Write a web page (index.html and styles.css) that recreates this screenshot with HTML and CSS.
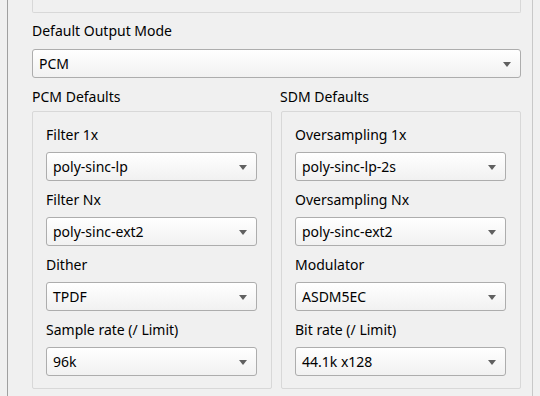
FILE: index.html
```html
<!DOCTYPE html>
<html lang="en">
  <head>
    <meta charset="UTF-8" />
    <meta name="viewport" content="width=device-width, initial-scale=1.0" />
    <title>Output Settings</title>
    <link rel="stylesheet" href="styles.css">
  </head>
  <body>
    <div class="frame">
      <div class="group-tail"></div>

      <div class="field-label">Default Output Mode</div>
      <div class="combo combo-wide">
        <span class="combo-text">PCM</span>
        <span class="combo-arrow"></span>
      </div>

      <div class="columns">
        <div class="column">
          <div class="group-title">PCM Defaults</div>
          <div class="group-box">
            <div class="field-label">Filter 1x</div>
            <div class="combo">
              <span class="combo-text">poly-sinc-lp</span>
              <span class="combo-arrow"></span>
            </div>
            <div class="field-label">Filter Nx</div>
            <div class="combo">
              <span class="combo-text">poly-sinc-ext2</span>
              <span class="combo-arrow"></span>
            </div>
            <div class="field-label">Dither</div>
            <div class="combo">
              <span class="combo-text">TPDF</span>
              <span class="combo-arrow"></span>
            </div>
            <div class="field-label">Sample rate (/ Limit)</div>
            <div class="combo">
              <span class="combo-text">96k</span>
              <span class="combo-arrow"></span>
            </div>
          </div>
        </div>

        <div class="column">
          <div class="group-title">SDM Defaults</div>
          <div class="group-box">
            <div class="field-label">Oversampling 1x</div>
            <div class="combo">
              <span class="combo-text">poly-sinc-lp-2s</span>
              <span class="combo-arrow"></span>
            </div>
            <div class="field-label">Oversampling Nx</div>
            <div class="combo">
              <span class="combo-text">poly-sinc-ext2</span>
              <span class="combo-arrow"></span>
            </div>
            <div class="field-label">Modulator</div>
            <div class="combo">
              <span class="combo-text">ASDM5EC</span>
              <span class="combo-arrow"></span>
            </div>
            <div class="field-label">Bit rate (/ Limit)</div>
            <div class="combo">
              <span class="combo-text">44.1k x128</span>
              <span class="combo-arrow"></span>
            </div>
          </div>
        </div>
      </div>
    </div>
  </body>
</html>
```

FILE: styles.css
```css
  html,
  body {
    margin: 0;
    padding: 0;
    height: 100%;
    overflow: hidden;
    background-color: #f0f0f0;
  }

  body {
    font-family: "Noto Sans", "Open Sans", sans-serif;
    font-size: 14px;
    color: #000;
  }

  /* scroll area frame around the settings page */
  .frame {
    margin-left: 7px;
    width: 526px;
    height: 100%;
    padding-left: 24px;
    box-sizing: border-box;
    border-left: 1px solid #a0a0a0;
    border-right: 1px solid #c8c8c8;
  }

  /* bottom of the group box scrolled above */
  .group-tail {
    width: 489px;
    height: 13px;
    box-sizing: border-box;
    border: 1px solid #d8d8d8;
    border-top: none;
    border-radius: 0 0 2px 2px;
    margin-bottom: 8px;
  }

  .field-label {
    line-height: 20px;
    height: 20px;
    white-space: nowrap;
  }

  .combo {
    display: flex;
    align-items: center;
    justify-content: space-between;
    height: 29px;
    box-sizing: border-box;
    margin-top: 7px;
    margin-bottom: 9px;
    padding: 0 9px 0 6px;
    border: 1px solid #adadad;
    border-radius: 3px;
    background: linear-gradient(to bottom, #ffffff, #f1f1f1);
  }

  .combo-wide {
    width: 489px;
    margin-top: 8px;
  }

  .combo-text {
    line-height: 27px;
    white-space: nowrap;
  }

  .combo-arrow {
    width: 0;
    height: 0;
    border-left: 4px solid transparent;
    border-right: 4px solid transparent;
    border-top: 5px solid #606060;
    margin-top: 1px;
  }

  .columns {
    display: flex;
    gap: 9px;
    width: 489px;
  }

  .column {
    width: 240px;
  }

  .group-title {
    line-height: 20px;
    height: 20px;
    margin-bottom: 4px;
  }

  .column + .column .group-title {
    margin-left: -1px;
  }

  .group-box {
    height: 278px;
    box-sizing: border-box;
    padding: 13px 14px 12px 13px;
    border: 1px solid #d8d8d8;
    border-radius: 2px;
  }

  .group-box .combo:last-child {
    margin-bottom: 0;
  }
```
